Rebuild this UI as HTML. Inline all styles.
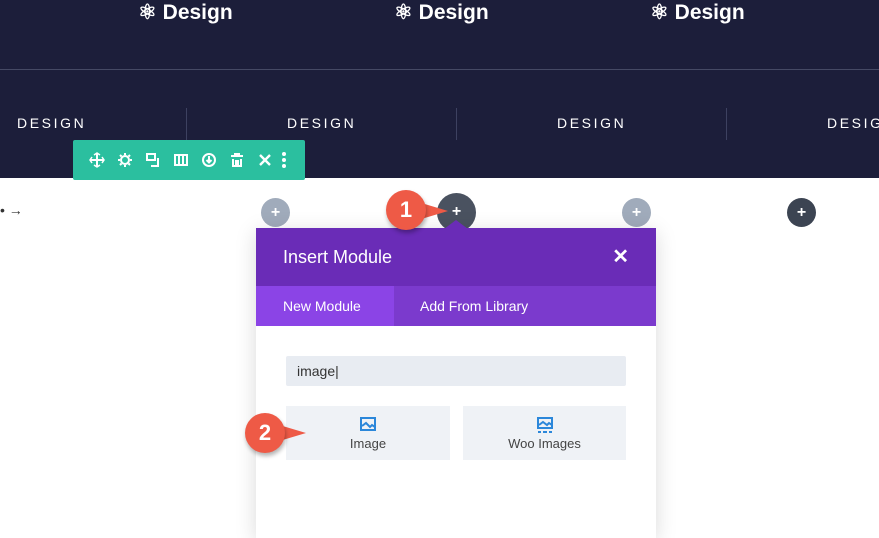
<!DOCTYPE html><html style="overflow:hidden;width:879px;height:538px"><head><style>
*{margin:0;padding:0;box-sizing:border-box}
body{width:879px;height:538px;overflow:hidden;background:#fff;font-family:"Liberation Sans",sans-serif;position:relative}
.a{position:absolute}
.top{left:0;top:0;width:879px;height:178px;background:#1c1e3a}
.logo{color:#fff;font-weight:bold;font-size:21px;top:0}
.nav{color:#fff;font-size:14px;letter-spacing:2.6px;top:115px}
.div{width:1px;height:32px;background:#3d4160;top:108px}
.circ{border-radius:50%;color:#fff;text-align:center;font-weight:bold}
.tb{left:73px;top:140px;width:232px;height:40px;background:#2bbf9f;border-radius:2px}
.tb svg{position:absolute;top:12px}
.callout{background:#ee5a46;border-radius:50%;color:#fff;font-size:22px;font-weight:bold;text-align:center;box-shadow:1px 3px 4px rgba(0,0,0,.3)}
.btn{position:absolute;top:178px;height:54px;background:#eff2f6;text-align:center;font-size:13px;color:#444}
.btn svg{position:absolute;top:11px;left:50%;margin-left:-8px}
.btn div{position:absolute;top:30px;width:100%}
</style></head><body>
<div class="a top"></div>
<div class="a logo" style="left:138px">⚛ Design</div>
<div class="a logo" style="left:394px">⚛ Design</div>
<div class="a logo" style="left:650px">⚛ Design</div>
<div class="a" style="left:0;top:69px;width:879px;height:1px;background:#454964"></div>
<div class="a nav" style="left:17px">DESIGN</div>
<div class="a nav" style="left:287px">DESIGN</div>
<div class="a nav" style="left:557px">DESIGN</div>
<div class="a nav" style="left:827px">DESIGN</div>
<div class="a div" style="left:186px"></div><div class="a div" style="left:456px"></div><div class="a div" style="left:726px"></div>
<div class="a tb">
<svg style="left:16px" width="16" height="16" viewBox="0 0 16 16" fill="none" stroke="#fff" stroke-width="2"><path d="M8 1v14M1 8h14"/><path d="M5 3l3-2 3 2M5 13l3 2 3-2M3 5L1 8l2 3M13 5l2 3-2 3" stroke-width="1.5"/></svg>
<svg style="left:44px" width="16" height="16" viewBox="0 0 16 16" fill="none" stroke="#fff" stroke-width="2"><circle cx="8" cy="8" r="4"/><path d="M8 1v2M8 13v2M1 8h2M13 8h2M3 3l1.5 1.5M11.5 11.5L13 13M3 13l1.5-1.5M11.5 4.5L13 3"/></svg>
<svg style="left:72px" width="16" height="16" viewBox="0 0 16 16" fill="none" stroke="#fff" stroke-width="2"><rect x="2" y="2" width="8" height="6"/><path d="M13 6v8H6"/></svg>
<svg style="left:100px" width="16" height="16" viewBox="0 0 16 16" fill="none" stroke="#fff" stroke-width="2"><rect x="2" y="3" width="12" height="10"/><path d="M6 3v10M10 3v10"/></svg>
<svg style="left:128px" width="16" height="16" viewBox="0 0 16 16" fill="none" stroke="#fff" stroke-width="2"><circle cx="8" cy="8" r="6"/><path d="M8 4v6M5.5 8L8 10.5 10.5 8"/></svg>
<svg style="left:156px" width="16" height="16" viewBox="0 0 16 16" fill="none" stroke="#fff" stroke-width="2"><path d="M2 4h12M6 4V2h4v2M4 7v7h8V7M7 8v5M9 8v5"/></svg>
<svg style="left:184px" width="16" height="16" viewBox="0 0 16 16" fill="none" stroke="#fff" stroke-width="2.4"><path d="M3 3l10 10M13 3L3 13"/></svg>
<svg style="left:208px" width="6" height="16" viewBox="0 0 6 16" fill="#fff"><circle cx="3" cy="2" r="2"/><circle cx="3" cy="8" r="2"/><circle cx="3" cy="14" r="2"/></svg>
</div>
<div class="a" style="left:0;top:202px;font-size:14px;color:#333">• →</div>
<div class="a circ" style="left:261px;top:198px;width:29px;height:29px;background:#a0abbb;line-height:29px">+</div>
<div class="a circ" style="left:622px;top:198px;width:29px;height:29px;background:#a0abbb;line-height:29px">+</div>
<div class="a circ" style="left:787px;top:198px;width:29px;height:29px;background:#3c4452;line-height:29px">+</div>
<div class="a circ" style="left:437px;top:193px;width:39px;height:39px;background:#4a5260;line-height:38px">+</div>
<div class="a" style="left:256px;top:228px;width:400px;height:310px;background:#fff;box-shadow:0 4px 20px rgba(0,0,0,.15)">
<div style="height:58px;background:#6a2cb7;color:#fff;font-size:18px;padding:19px 0 0 27px">Insert Module<span style="position:absolute;right:27px;top:16px;font-size:20px;font-weight:bold">✕</span></div>
<div style="height:40px;background:#7b3acd;color:#fff;font-size:14px;position:relative"><div style="position:absolute;left:0;top:0;width:138px;height:40px;background:#8b44e6;padding:12px 0 0 27px">New Module</div><div style="position:absolute;left:164px;top:12px">Add From Library</div></div>
<div style="position:absolute;left:30px;top:128px;width:340px;height:30px;background:#e8ecf2;border-radius:2px;font-size:14px;color:#333;padding:7px 11px">image|</div>
<div class="btn" style="left:30px;width:164px"><svg width="16" height="14" viewBox="0 0 16 14" fill="none" stroke="#2b87da" stroke-width="2"><rect x="1" y="1" width="14" height="12"/><path d="M2 9l4-3 4 4 2-2 3 2"/></svg><div>Image</div></div>
<div class="btn" style="left:207px;width:163px"><svg width="16" height="16" viewBox="0 0 16 16" fill="none" stroke="#2b87da" stroke-width="2"><rect x="1" y="1" width="14" height="10"/><path d="M2 8l4-3 4 3 2-2 3 2"/><path d="M1 15h3M6 15h4M12 15h3"/></svg><div>Woo Images</div></div>
</div>
<div class="a" style="left:444px;top:220px;width:0;height:0;border-left:12px solid transparent;border-right:12px solid transparent;border-bottom:9px solid #6a2cb7"></div>
<div class="a" style="left:418px;top:202px;width:0;height:0;border-top:9px solid transparent;border-bottom:9px solid transparent;border-left:30px solid #ee5a46"></div>
<div class="a callout" style="left:386px;top:190px;width:40px;height:40px;line-height:40px">1</div>
<div class="a" style="left:276px;top:424px;width:0;height:0;border-top:9px solid transparent;border-bottom:9px solid transparent;border-left:30px solid #ee5a46"></div>
<div class="a callout" style="left:245px;top:413px;width:40px;height:40px;line-height:40px">2</div>
</body></html>
